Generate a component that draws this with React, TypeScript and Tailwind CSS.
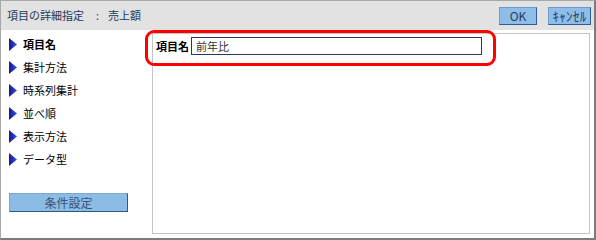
import React, { FC } from "react";

const font = { fontFamily: '"Noto Sans CJK JP", "Noto Sans", sans-serif' };

const menuItems = ["項目名", "集計方法", "時系列集計", "並べ順", "表示方法", "データ型"];

const Arrow: FC = () => (
  <svg width="8" height="13" viewBox="0 0 8 13">
    <defs>
      <linearGradient id="arrowFill" x1="0" y1="0" x2="1" y2="0">
        <stop offset="0" stopColor="#1a1a7a" />
        <stop offset="1" stopColor="#2f4fff" />
      </linearGradient>
    </defs>
    <polygon points="0,0 8,6.5 0,13" fill="url(#arrowFill)" />
  </svg>
);

const App: FC = () => {
  return (
    <div
      style={font}
      className="relative w-[596px] h-[240px] bg-white flex flex-col border-l border-t border-[#a8a8a8] border-r-2 border-b-2 border-r-[#7c7c7c] border-b-[#7c7c7c]">
      {/* header */}
      <div className="h-[29px] bg-[#e2e2e2] flex items-center pl-[6px] pr-[3px]">
        <span className="text-[11px] text-[#243a5a]">項目の詳細指定</span>
        <span className="text-[11px] text-[#243a5a] ml-[12px]">:</span>
        <span className="text-[11px] text-[#243a5a] ml-[9px]">売上額</span>
        <div className="flex-1" />
        <button className="w-[38px] h-[18px] bg-[#8dbde8] border border-[#6d9ccc] border-r-[#2f5c8c] border-b-[#2f5c8c] text-[12px] leading-none text-[#2a3a5a] flex items-center justify-center">
          OK
        </button>
        <button className="ml-[11px] w-[43px] h-[18px] bg-[#8dbde8] border border-[#6d9ccc] border-r-[#2f5c8c] border-b-[#2f5c8c] text-[13px] leading-none text-[#2a3a5a] flex items-center justify-center tracking-[0.3px]">
          ｷｬﾝｾﾙ
        </button>
      </div>

      {/* body */}
      <div className="flex flex-1">
        <div className="w-[151px] pt-[3px] pl-[8px] flex flex-col">
          {menuItems.map((item, i) => (
            <div key={item} className="h-[23px] flex items-center gap-[6px]">
              <Arrow />
              <span
                className={
                  i === 0
                    ? "text-[11px] font-bold text-black"
                    : "text-[11px] text-black"
                }>
                {item}
              </span>
            </div>
          ))}
          <button className="mt-[22px] w-[119px] h-[19px] bg-[#8cbbe4] border border-[#7aa8d4] border-r-[#2a5888] border-b-[#2a5888] text-[12px] leading-none text-[#3a5478] flex items-center justify-center">
            条件設定
          </button>
        </div>

        <div className="mt-[3px] w-[438px] h-[201px] border border-[#c4c4c4] pl-[3px] pt-[3px]">
          <div className="flex items-center">
            <span className="text-[11px] font-bold text-black w-[35px]">項目名</span>
            <input
              type="text"
              defaultValue="前年比"
              className="w-[291px] h-[18px] border border-[#33335f] px-[4px] text-[11px] text-[#333] outline-none"
              style={font}
            />
          </div>
        </div>
      </div>

      {/* annotation */}
      <div className="absolute left-[144px] top-[29px] w-[351px] h-[36px] border-[3px] border-[#ff0000] rounded-[9px] pointer-events-none" />
    </div>
  );
};

export default App;
